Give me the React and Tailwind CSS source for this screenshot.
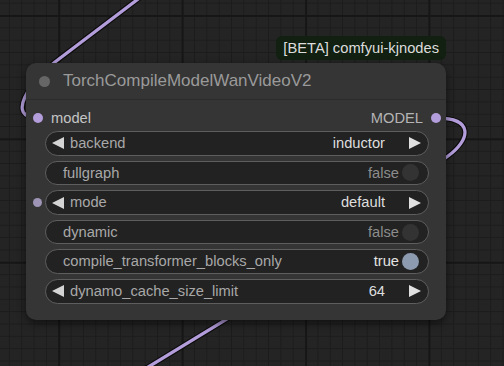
import React from 'react';

const widgets = [
    { type: 'combo', label: 'backend', value: 'inductor' },
    { type: 'toggle', label: 'fullgraph', value: false },
    { type: 'combo', label: 'mode', value: 'default', input: true },
    { type: 'toggle', label: 'dynamic', value: false },
    { type: 'toggle', label: 'compile_transformer_blocks_only', value: true },
    { type: 'number', label: 'dynamo_cache_size_limit', value: '64' },
];

const Arrow = ({ dir }) => (
    <svg width="12" height="12" viewBox="0 0 12 12" className="flex-none">
        {dir === 'left'
            ? <polygon points="12,0 12,12 0,6" fill="#d4d4d4" />
            : <polygon points="0,0 0,12 12,6" fill="#e0e0e0" />}
    </svg>
);

const Widget = ({ w }) => {
    const hasArrows = w.type !== 'toggle';
    return (
        <div className="relative">
            {w.input && (
                <div className="absolute left-[-12px] top-[8px] w-[9px] h-[9px] rounded-full bg-[#9e95b6]" />
            )}
            <div className="flex items-center h-[24.7px] rounded-full border border-[#5e5e5e] bg-[#222222] text-[14.7px] leading-none">
                {hasArrows ? (
                    <>
                        <div className="pl-[6px]"><Arrow dir="left" /></div>
                        <span className="ml-[6px] text-[#a8a8a8]">{w.label}</span>
                        <span className="flex-1" />
                        <span className="text-[#dedede]">{w.value}</span>
                        <div className="ml-[24px] pr-[7px]"><Arrow dir="right" /></div>
                    </>
                ) : (
                    <>
                        <span className="pl-[17px] text-[#a8a8a8]">{w.label}</span>
                        <span className="flex-1" />
                        <span className={w.value ? 'text-[#e2e2e2]' : 'text-[#8c8c8c]'}>{w.value ? 'true' : 'false'}</span>
                        <span
                            className={`ml-[3px] mr-[9px] w-[17px] h-[17px] rounded-full ${w.value ? 'bg-[#8c9bb0]' : 'bg-[#333333]'}`}
                        />
                    </>
                )}
            </div>
        </div>
    );
};

const Canvas = () => (
    <svg className="absolute inset-0" width="504" height="366">
        <defs>
            <pattern id="minor" x="8.9" y="2.66" width="12.34" height="12.34" patternUnits="userSpaceOnUse">
                <rect x="0" y="0" width="1" height="12.34" fill="#1c1c1c" />
                <rect x="0" y="0" width="12.34" height="1" fill="#1c1c1c" />
            </pattern>
            <pattern id="major" x="58.3" y="15" width="123.4" height="123.4" patternUnits="userSpaceOnUse">
                <rect x="0" y="0" width="2" height="123.4" fill="#161616" />
                <rect x="0" y="0" width="123.4" height="2" fill="#161616" />
            </pattern>
        </defs>
        <rect width="504" height="366" fill="#242424" />
        <rect width="504" height="366" fill="url(#minor)" />
        <rect width="504" height="366" fill="url(#major)" />
        {/* links */}
        <g fill="none" strokeLinecap="round">
            <path d="M150 -10 L55 62 C30 82, 5 118, 38 118" stroke="#0b0b0b" strokeWidth="5.5" />
            <path d="M150 -10 L55 62 C30 82, 5 118, 38 118" stroke="#b39ddb" strokeWidth="3.3" />
            <path d="M436 118 C475 118, 470 140, 448 156 L250 305 L140 372" stroke="#0b0b0b" strokeWidth="5.5" />
            <path d="M436 118 C475 118, 470 140, 448 156 L250 305 L140 372" stroke="#b39ddb" strokeWidth="3.3" />
        </g>
    </svg>
);

export default function App() {
    return (
        <div className="relative w-[504px] h-[366px] overflow-hidden bg-[#242424] font-['Liberation_Sans',Arial,sans-serif]">
            <Canvas />
            <div className="absolute left-[26px] top-[36px] w-[420px] flex flex-col items-end">
                <div className="h-[24px] px-[7px] flex items-center rounded-[6px] bg-[#112011] text-[14.7px] text-[#dcdcdc]">
                    [BETA] comfyui-kjnodes
                </div>
                <div className="mt-[3px] w-[420px] rounded-[10px] bg-[#353535] shadow-[0_3px_8px_rgba(0,0,0,0.55)]">
                    <div className="h-[37px] flex items-center border-b border-[#2c2c2c]">
                        <span className="ml-[13px] w-[11px] h-[11px] rounded-full bg-[#666666]" />
                        <span className="ml-[13px] text-[17px] text-[#9a9a9a]">TorchCompileModelWanVideoV2</span>
                    </div>
                    <div className="pt-[6px] pb-[16px]">
                        <div className="h-[24px] flex items-center text-[14.7px]">
                            <span className="ml-[7px] w-[10px] h-[10px] rounded-full bg-[#b39ddb]" />
                            <span className="ml-[8px] text-[#c4c4c4]">model</span>
                            <span className="flex-1" />
                            <span className="text-[#b4b4b4]">MODEL</span>
                            <span className="ml-[8px] mr-[5px] w-[10px] h-[10px] rounded-full bg-[#b39ddb]" />
                        </div>
                        <div className="mt-[1px] ml-[19px] mr-[17px] flex flex-col gap-[4.9px]">
                            {widgets.map((w) => <Widget key={w.label} w={w} />)}
                        </div>
                    </div>
                </div>
            </div>
        </div>
    );
}
